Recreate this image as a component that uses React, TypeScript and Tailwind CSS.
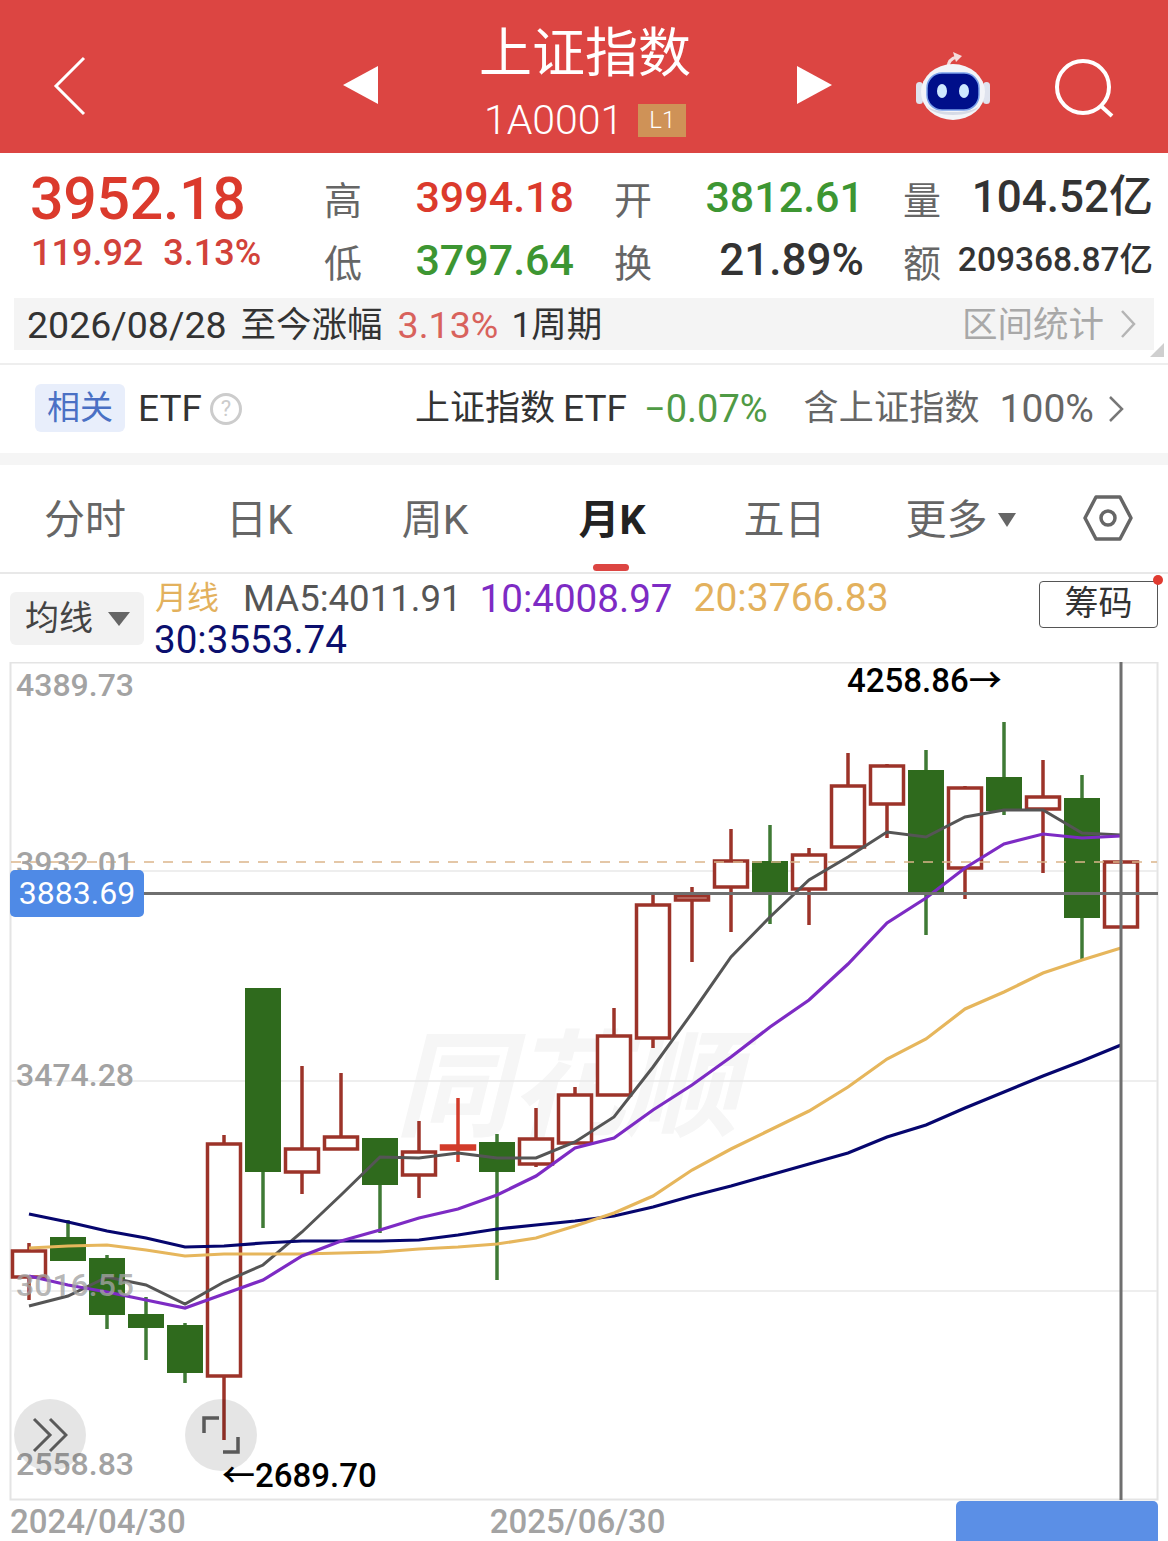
import React from "react";

const CJK = '"Roboto","Noto Sans CJK SC",sans-serif';

type C = { x: number; hi: number; lo: number; t: number; b: number; up: boolean };
const raw: [number, number, number, number, boolean][] = [
  [1243, 1300, 1251, 1277, true],
  [1220, 1261, 1237, 1261, false],
  [1255, 1329, 1258, 1315, false],
  [1297, 1360, 1314, 1328, false],
  [1323, 1383, 1325, 1373, false],
  [1135, 1440, 1144, 1376, true],
  [988, 1228, 988, 1172, false],
  [1066, 1194, 1149, 1172, true],
  [1073, 1150, 1137, 1149, true],
  [1138, 1233, 1138, 1185, false],
  [1121, 1198, 1152, 1175, true],
  [1098, 1162, 1146, 1149, true],
  [1134, 1280, 1142, 1172, false],
  [1108, 1167, 1139, 1164, true],
  [1087, 1143, 1095, 1143, true],
  [1008, 1096, 1036, 1095, true],
  [893, 1048, 905, 1038, true],
  [887, 962, 896, 900, true],
  [829, 932, 861, 887, true],
  [825, 924, 861, 893, false],
  [848, 925, 855, 889, true],
  [753, 848, 786, 847, true],
  [764, 838, 766, 804, true],
  [750, 935, 770, 892, false],
  [786, 899, 788, 868, true],
  [722, 815, 777, 811, false],
  [760, 873, 797, 809, true],
  [775, 959, 798, 918, false],
  [862, 927, 862, 927, true],
];
const candles: C[] = raw.map((r, i) => ({ x: 29 + 39 * i, hi: r[0], lo: r[1], t: r[2], b: r[3], up: r[4] }));

const pts = (ys: number[]) => ys.map((y, i) => `${29 + 39 * i},${y}`).join(" ");
const ma5 = [1306, 1296, 1277, 1285, 1304, 1282, 1265, 1232, 1195, 1157, 1158, 1153, 1158, 1158, 1142, 1117, 1067, 1013, 957, 917, 880, 857, 832, 837, 817, 810, 810, 833, 835];
const ma10 = [1276, 1285, 1292, 1300, 1308, 1294, 1280, 1256, 1241, 1230, 1218, 1209, 1195, 1176, 1148, 1138, 1110, 1085, 1057, 1027, 1000, 964, 923, 898, 868, 844, 834, 838, 836];
const ma20 = [1248, 1246, 1245, 1250, 1256, 1254, 1254, 1254, 1253, 1252, 1249, 1247, 1244, 1238, 1226, 1213, 1196, 1170, 1149, 1130, 1111, 1087, 1059, 1039, 1009, 992, 973, 960, 948];
const ma30 = [1214, 1222, 1231, 1238, 1247, 1246, 1243, 1241, 1241, 1241, 1240, 1235, 1229, 1225, 1221, 1216, 1207, 1196, 1186, 1175, 1164, 1153, 1137, 1125, 1108, 1092, 1076, 1061, 1045];

function Candles() {
  return (
    <>
      {candles.map((c, i) => {
        const red = i === 11 ? "#d23b2a" : "#9c3329";
        if (c.up) {
          return (
            <g key={i}>
              <line x1={c.x} x2={c.x} y1={c.hi} y2={c.t} stroke={red} strokeWidth={3.5} />
              <line x1={c.x} x2={c.x} y1={c.b} y2={c.lo} stroke={red} strokeWidth={3.5} />
              <rect x={c.x - 16.5} y={c.t} width={33} height={c.b - c.t} fill={i === 11 ? red : "#ffffff"} fillOpacity={i === 28 ? 0 : 1} stroke={red} strokeWidth={3.5} />
            </g>
          );
        }
        return (
          <g key={i}>
            <line x1={c.x} x2={c.x} y1={c.hi} y2={c.lo} stroke="#3f7a35" strokeWidth={3.5} />
            <rect x={c.x - 18} y={c.t} width={36} height={c.b - c.t} fill="#2f6a1d" />
          </g>
        );
      })}
    </>
  );
}

function Robot() {
  return (
    <svg width="76" height="70" viewBox="0 0 76 70">
      <path d="M33 18c0-7 4-10 9-11" fill="none" stroke="#f5dcdc" strokeWidth="3" />
      <path d="M38 2l9 4-6 6z" fill="#f5dcdc" />
      <rect x="1" y="32" width="7" height="22" rx="3.5" fill="#dfe3ee" />
      <rect x="68" y="32" width="7" height="22" rx="3.5" fill="#dfe3ee" />
      <ellipse cx="38" cy="42" rx="32" ry="28" fill="#f3f4f8" />
      <path d="M12 56c6 12 46 12 52 0-8 8-44 8-52 0z" fill="#d6dae6" />
      <rect x="12" y="23" width="52" height="37" rx="15" fill="#000f8a" stroke="#7aa0ea" strokeWidth="1.5" />
      <ellipse cx="27" cy="41" rx="5" ry="7" fill="#cfe9ff" />
      <ellipse cx="49" cy="41" rx="5" ry="7" fill="#cfe9ff" />
    </svg>
  );
}

export default function App() {
  return (
    <div className="w-[1168px] h-[1541px] overflow-hidden bg-white text-[#333]" style={{ fontFamily: CJK }}>
      {/* Header */}
      <header className="h-[153px] bg-[#dc4542] flex items-start text-white">
        <svg className="ml-[52px] mt-[56px]" width="36" height="60" viewBox="0 0 36 60">
          <path d="M32 2L4 30l28 28" fill="none" stroke="#fff" strokeWidth="3" />
        </svg>
        <svg className="ml-[255px] mt-[66px]" width="36" height="38" viewBox="0 0 36 38">
          <path d="M35 0v38L0 19z" fill="#fff" />
        </svg>
        <div className="ml-[100px] w-[212px] flex flex-col items-center">
          <div className="text-[53px] leading-[60px] mt-[24px] whitespace-nowrap">上证指数</div>
          <div className="flex items-center mt-[14px] w-full">
            <span className="ml-[5px] text-[41px] leading-[44px] font-light">1A0001</span>
            <span className="ml-[15px] w-[48px] h-[33px] bg-[#cf9257] text-[24px] leading-[33px] text-center font-light">L1</span>
          </div>
        </div>
        <svg className="ml-[105px] mt-[66px]" width="36" height="38" viewBox="0 0 36 38">
          <path d="M1 0v38l35-19z" fill="#fff" />
        </svg>
        <div className="ml-[83px] mt-[50px]">
          <Robot />
        </div>
        <svg className="ml-[63px] mt-[57px]" width="64" height="62" viewBox="0 0 64 62">
          <circle cx="29" cy="30" r="26" fill="none" stroke="#fff" strokeWidth="4" />
          <path d="M47 49l11 10" stroke="#fff" strokeWidth="4" />
        </svg>
      </header>

      {/* Stats */}
      <section className="h-[145px] flex">
        <div className="w-[324px] pl-[30px] pt-[14px]">
          <div className="text-[59px] leading-[64px] font-medium text-[#db3a2c] tracking-[-0.3px]">3952.18</div>
          <div className="flex text-[36px] leading-[40px] text-[#d2423a] ml-[1px] mt-[2px] font-medium">
            <span>119.92</span>
            <span className="ml-[20px]">3.13%</span>
          </div>
        </div>
        <div className="grid grid-cols-[290px_289px_250px] grid-rows-[63px_63px] pt-[12px] items-center">
          {[
            ["高", "3994.18", "text-[#db3a2c] text-[43px]"],
            ["开", "3812.61", "text-[#3d9632] text-[43px]"],
            ["量", "104.52亿", "text-[#333] text-[44px]"],
            ["低", "3797.64", "text-[#3d9632] text-[43px]"],
            ["换", "21.89%", "text-[#333] text-[44px]"],
            ["额", "209368.87亿", "text-[#333] text-[33.5px]"],
          ].map(([l, v, c], i) => (
            <div key={l} className={`flex justify-between items-center ${i % 3 === 2 ? "" : i % 3 === 1 ? "pr-[39px]" : "pr-[40px]"}`}>
              <span className="text-[38px] leading-[44px] text-[#666] mt-[8px]">{l}</span>
              <span className={`${c} font-medium leading-[50px] whitespace-nowrap`}>{v}</span>
            </div>
          ))}
        </div>
      </section>

      {/* Period band */}
      <div className="relative mx-[14px] h-[52px] bg-[#f4f4f4] flex items-center pl-[13px] text-[35.5px] leading-[44px] text-[#333] whitespace-nowrap">
        <span className="text-[37.5px] mt-[2px]">2026/08/28</span>
        <span className="ml-[14px] mt-[2px]">至今涨幅</span>
        <span className="ml-[15px] text-[37.6px] text-[#d8625c] mt-[2px]">3.13%</span>
        <span className="ml-[13px] mt-[2px]">1周期</span>
        <span className="ml-auto text-[#a8a8a8] mt-[2px]">区间统计</span>
        <svg className="ml-[16px] mr-[18px]" width="16" height="30" viewBox="0 0 16 30">
          <path d="M2 2l12 13L2 28" fill="none" stroke="#b4b4b4" strokeWidth="2.5" />
        </svg>
        <svg className="absolute right-[-10px] bottom-[-7px]" width="14" height="14" viewBox="0 0 14 14">
          <path d="M14 0v14H0z" fill="#cfcfcf" />
        </svg>
      </div>

      {/* ETF row */}
      <div className="mt-[13px] h-[90px] border-t-2 border-[#eeeeee] flex items-center whitespace-nowrap text-[35px] leading-[44px]">
        <span className="ml-[35px] w-[90px] h-[48px] bg-[#e8eefb] rounded-[6px] text-[#4a70c4] text-[33px] leading-[48px] text-center mb-[2px]">相关</span>
        <span className="ml-[13px] w-[62px] text-[37px]">ETF</span>
        <span className="ml-[10px] w-[32px] h-[32px] rounded-full border-[3px] border-[#cccccc] text-[#cccccc] text-[22px] leading-[26px] text-center">?</span>
        <span className="ml-[173px]">上证指数</span>
        <span className="ml-[8px] text-[37px]">ETF</span>
        <span className="ml-[17px] text-[#4f9a45] text-[38px]">−0.07%</span>
        <span className="ml-[36px] text-[#666] tracking-[0.2px]">含上证指数</span>
        <span className="ml-[20px] text-[#666] text-[39px]">100%</span>
        <svg className="ml-[14px]" width="16" height="28" viewBox="0 0 16 28">
          <path d="M2 2l12 12L2 26" fill="none" stroke="#777" strokeWidth="2.5" />
        </svg>
      </div>
      <div className="h-[12px] bg-[#f5f5f5]" />

      {/* Tabs */}
      <nav className="relative h-[109px] border-b-2 border-[#e8e8e8] flex items-center pt-[3px] text-[41px] leading-[48px] text-[#666] whitespace-nowrap">
        <span className="ml-[44px]">分时</span>
        <span className="ml-[100px]">日K</span>
        <span className="ml-[109px]">周K</span>
        <span className="ml-[110px] font-bold text-[#222]">月K</span>
        <span className="ml-[98px]">五日</span>
        <span className="ml-[80px]">更多</span>
        <svg className="ml-[10px]" width="18" height="14" viewBox="0 0 18 14">
          <path d="M0 0h18L9 14z" fill="#666" />
        </svg>
        <svg className="ml-[67px] mt-[-4px]" width="50" height="46" viewBox="0 0 50 46">
          <path d="M13 2h24l11 21-11 21H13L2 23z" fill="none" stroke="#666" strokeWidth="3.5" strokeLinejoin="round" />
          <circle cx="25" cy="23" r="7" fill="none" stroke="#666" strokeWidth="3.5" />
        </svg>
        <span className="absolute left-[593px] bottom-[1px] w-[36px] h-[7px] bg-[#dc4542] rounded-[4px]" />
      </nav>

      {/* Legend */}
      <div className="h-[88px] flex items-start relative whitespace-nowrap">
        <div className="ml-[10px] mt-[18px] w-[134px] h-[53px] bg-[#f2f2f2] rounded-[6px] flex items-center pl-[15px] text-[34px] text-[#444]">
          <span>均线</span>
          <svg className="ml-[15px]" width="22" height="14" viewBox="0 0 22 14">
            <path d="M0 0h22L11 14z" fill="#666" />
          </svg>
        </div>
        <div className="ml-[11px] mt-[4px] flex flex-col text-[38.6px] leading-[41px]">
          <div className="flex items-center">
            <span className="text-[32px] text-[#e3b15d]">月线</span>
            <span className="ml-[24px] text-[#555] text-[36.6px]">MA5:4011.91</span>
            <span className="ml-[18px] text-[#7d2bc4]">10:4008.97</span>
            <span className="ml-[21px] text-[#e3b15d] text-[39px]">20:3766.83</span>
          </div>
          <div className="text-[#0b0f6e] ml-[-1px]">30:3553.74</div>
        </div>
        <div className="absolute left-[1039px] top-[7px] w-[119px] h-[47px] border-[1.5px] border-[#555] rounded-[4px] text-[34px] leading-[42px] text-center text-[#333]">筹码</div>
        <span className="absolute left-[1153px] top-[1px] w-[10px] h-[10px] rounded-full bg-[#e03a30]" />
      </div>

      {/* Chart */}
      <div className="relative h-[839px]">
        <div className="absolute left-[395px] top-[360px] text-[116px] leading-[130px] font-bold italic text-[#f6f6f6] tracking-[-2px]">同花顺</div>
        <svg className="absolute inset-0" width="1168" height="839" viewBox="0 662 1168 839">
          <rect x="10.5" y="662.5" width="1147" height="837" fill="none" stroke="#e4e4e4" strokeWidth="2" />
          {[871, 1081, 1291].map((y) => (
            <line key={y} x1="11" x2="1157" y1={y} y2={y} stroke="#e8e8e8" strokeWidth="1.5" />
          ))}
          <Candles />
          <line x1="11" x2="1157" y1="862" y2="862" stroke="#dcb58a" strokeWidth="1.5" strokeDasharray="10 9" />
          <polyline points={pts(ma5)} fill="none" stroke="#555555" strokeWidth="3" />
          <polyline points={pts(ma30)} fill="none" stroke="#06066e" strokeWidth="3.2" />
          <polyline points={pts(ma20)} fill="none" stroke="#e6b65c" strokeWidth="3.2" />
          <polyline points={pts(ma10)} fill="none" stroke="#7d2bc4" strokeWidth="3.2" />
          <line x1="144" x2="1158" y1="893.5" y2="893.5" stroke="#6f6f6f" strokeWidth="3" />
          <line x1="1121" x2="1121" y1="662" y2="1500" stroke="#6f6f6f" strokeWidth="3" />
        </svg>
        <span className="absolute left-[16px] top-[3px] text-[32px] leading-[40px] font-medium text-[#a3a3a3]">4389.73</span>
        <span className="absolute left-[16px] top-[181px] text-[32px] leading-[40px] font-medium text-[#a3a3a3]">3932.01</span>
        <span className="absolute left-[16px] top-[393px] text-[32px] leading-[40px] font-medium text-[#a3a3a3]">3474.28</span>
        <span className="absolute left-[16px] top-[603px] text-[32px] leading-[40px] font-medium text-[#a3a3a3]/80">3016.55</span>
        <span className="absolute left-[16px] top-[782px] text-[32px] leading-[40px] font-medium text-[#a3a3a3]">2558.83</span>
        <span className="absolute left-[847px] top-[-1px] text-[33px] leading-[40px] font-medium text-black whitespace-nowrap">4258.86→</span>
        <span className="absolute left-[222px] top-[794px] text-[33px] leading-[40px] font-medium text-black whitespace-nowrap">←2689.70</span>
        <div className="absolute left-[10px] top-[208px] w-[134px] h-[47px] bg-[#4f8ae6] rounded-[5px] text-white text-[32px] leading-[47px] text-center">3883.69</div>
        <div className="absolute left-[14px] top-[737px] w-[72px] h-[72px] rounded-full bg-black/10 flex items-center justify-center">
          <svg width="36" height="36" viewBox="0 0 36 36">
            <path d="M2 2l16 16L2 34M18 2l16 16-16 16" fill="none" stroke="#5a5a5a" strokeWidth="3" />
          </svg>
        </div>
        <div className="absolute left-[185px] top-[737px] w-[72px] h-[72px] rounded-full bg-black/10 flex items-center justify-center">
          <svg width="38" height="38" viewBox="0 0 38 38">
            <path d="M17 2H2v15M21 36h15V21" fill="none" stroke="#5a5a5a" strokeWidth="3.5" />
          </svg>
        </div>
      </div>

      {/* X axis */}
      <div className="h-[40px] flex items-start text-[33px] leading-[34px] font-medium text-[#a3a3a3] whitespace-nowrap">
        <span className="ml-[10px] mt-[4px]">2024/04/30</span>
        <span className="ml-[304px] mt-[4px]">2025/06/30</span>
        <div className="ml-auto mr-[10px] w-[202px] h-[40px] bg-[#5b8fe6] rounded-t-[5px]" />
      </div>
    </div>
  );
}
